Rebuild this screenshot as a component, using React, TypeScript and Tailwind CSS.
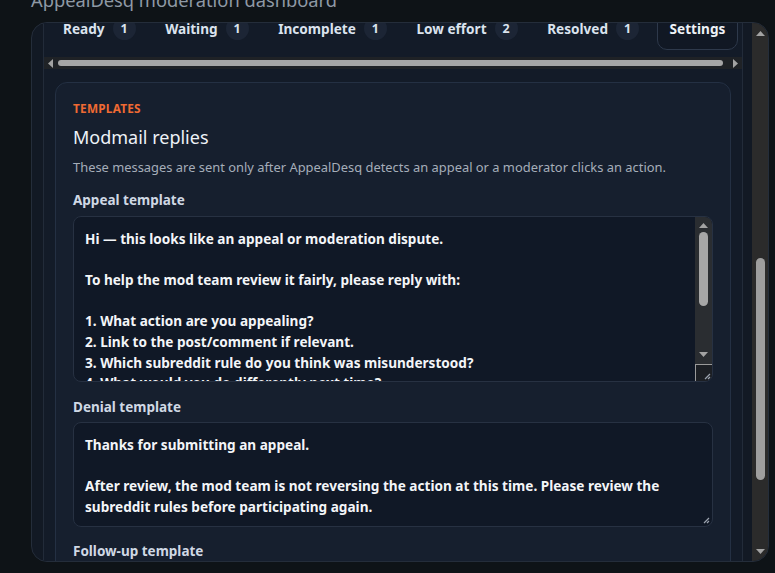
import React from 'react'

const tabs = [
  { label: 'Ready', count: 1 },
  { label: 'Waiting', count: 1 },
  { label: 'Incomplete', count: 1 },
  { label: 'Low effort', count: 2 },
  { label: 'Resolved', count: 1 },
]

const appealText = `Hi — this looks like an appeal or moderation dispute.

To help the mod team review it fairly, please reply with:

1. What action are you appealing?
2. Link to the post/comment if relevant.
3. Which subreddit rule do you think was misunderstood?
4. What would you do differently next time?`

const denialText = `Thanks for submitting an appeal.

After review, the mod team is not reversing the action at this time. Please review the subreddit rules before participating again.`

function Arrow({ dir, className = '' }: { dir: 'up' | 'down' | 'left' | 'right'; className?: string }) {
  const pts = {
    up: '0,7 4.5,2 9,7',
    down: '0,2 4.5,7 9,2',
    left: '7,0 2,4.5 7,9',
    right: '2,0 7,4.5 2,9',
  }[dir]
  return (
    <svg width="9" height="9" viewBox="0 0 9 9" className={className}>
      <polygon points={pts} fill="#a3a3a3" />
    </svg>
  )
}

function Grip() {
  return (
    <svg width="8" height="8" viewBox="0 0 8 8">
      <path d="M7 2 L2 7 M7 5 L5 7" stroke="#9ca3af" strokeWidth="1.2" />
    </svg>
  )
}

export default function App() {
  return (
    <div className="h-[573px] w-[775px] overflow-hidden bg-[#0e1317] font-['Segoe_UI','Noto_Sans',sans-serif]">
      <h1 className="-mt-[13px] ml-[31px] text-[18.3px] leading-[26px] text-[#8e99a5]">AppealDesq moderation dashboard</h1>

      <div className="ml-[31px] mt-[9px] flex h-[540px] w-[738px] overflow-hidden rounded-[16px] border border-[#242d3a] bg-[#121924]">
        {/* main content column */}
        <div className="min-w-0 flex-1 overflow-hidden pl-[11px] pr-[9px]">
          <div className="h-full overflow-hidden border-x border-[#222b39] bg-[#131b28]">
            {/* tab strip, scrolled up a little */}
            <div className="-mt-[16px] flex items-center gap-[5.6px] overflow-hidden pb-[7px] pl-[7px] pr-[4px]">
              {tabs.map(t => (
                <div key={t.label} className="flex shrink-0 items-center gap-2 whitespace-nowrap px-3 py-[10px] text-[13.6px] font-bold leading-[20px] text-[#dbe3ee]">
                  <span>{t.label}</span>
                  <span className="flex h-[23px] w-[23px] items-center justify-center rounded-full bg-[#1c2535] text-[12.5px]">{t.count}</span>
                </div>
              ))}
              <div className="shrink-0 whitespace-nowrap rounded-[10px] border border-[#2e394b] bg-[#111824] px-3 py-[10px] text-[13.6px] font-bold leading-[20px] text-[#eef2f7]">
                Settings
              </div>
            </div>

            {/* horizontal scrollbar of tab strip */}
            <div className="flex h-[12px] items-center bg-[#1f2226] px-[2px]">
              <Arrow dir="left" />
              <div className="mx-[3px] h-[6px] flex-1 rounded-full bg-[#a6a6a6]" />
              <Arrow dir="right" className="ml-[5px]" />
            </div>

            <div className="px-[11px] pt-[13px]">
              <div className="rounded-[12px] border border-[#243043] bg-[#161f2e] px-[17px] pt-[18px] pb-6">
                <p className="text-[11.8px] font-bold uppercase leading-[14px] tracking-[0.02em] text-[#ef6a33]">Templates</p>
                <h2 className="mt-[9px] text-[18px] leading-[26px] text-[#eef2f7]">Modmail replies</h2>
                <p className="mt-[7px] text-[12.9px] leading-[20px] text-[#a5adb9]">
                  These messages are sent only after AppealDesq detects an appeal or a moderator clicks an action.
                </p>

                <p className="mt-[14px] text-[13.5px] font-bold leading-[18px] text-[#cfd8e4]">Appeal template</p>
                <div className="relative mt-[7px] flex h-[166px] overflow-hidden rounded-[8px] border border-[#273142] bg-[#101826]">
                  <div className="flex-1 whitespace-pre-wrap px-[11px] pt-3 text-[13.6px] font-bold leading-[20.6px] text-[#f3f5f8]">
                    {appealText}
                  </div>
                  <div className="flex w-[17px] flex-col items-center bg-[#2a2d31]">
                    <Arrow dir="up" className="mt-[4px]" />
                    <div className="mt-[2px] h-[74px] w-[9px] rounded-full bg-[#a6a6a6]" />
                    <div className="flex-1" />
                    <Arrow dir="down" className="mb-[5px]" />
                    <div className="flex h-[17px] w-[17px] items-end justify-end border-l border-t border-[#9a9a9a] bg-[#1c1f24] p-[1px]">
                      <Grip />
                    </div>
                  </div>
                </div>

                <p className="mt-[16px] text-[13.5px] font-bold leading-[18px] text-[#cfd8e4]">Denial template</p>
                <div className="relative mt-[6px] h-[105px] rounded-[8px] border border-[#273142] bg-[#101826]">
                  <div className="whitespace-pre-wrap px-[11px] pt-3 pr-[40px] text-[13.6px] font-bold leading-[20.6px] text-[#f3f5f8]">
                    {denialText}
                  </div>
                  <div className="absolute bottom-[2px] right-[2px]">
                    <Grip />
                  </div>
                </div>

                <p className="mt-[15px] text-[13.5px] font-bold leading-[18px] text-[#cfd8e4]">Follow-up template</p>
              </div>
            </div>
          </div>
        </div>

        {/* outer vertical scrollbar */}
        <div className="flex w-[16px] flex-col items-center bg-[#2b2b2b]">
          <Arrow dir="up" className="mt-[6px]" />
          <div className="mt-[220px] h-[222px] w-[9px] rounded-full bg-[#9e9e9e]" />
          <div className="flex-1" />
          <Arrow dir="down" className="mb-[5px]" />
        </div>
      </div>
    </div>
  )
}
